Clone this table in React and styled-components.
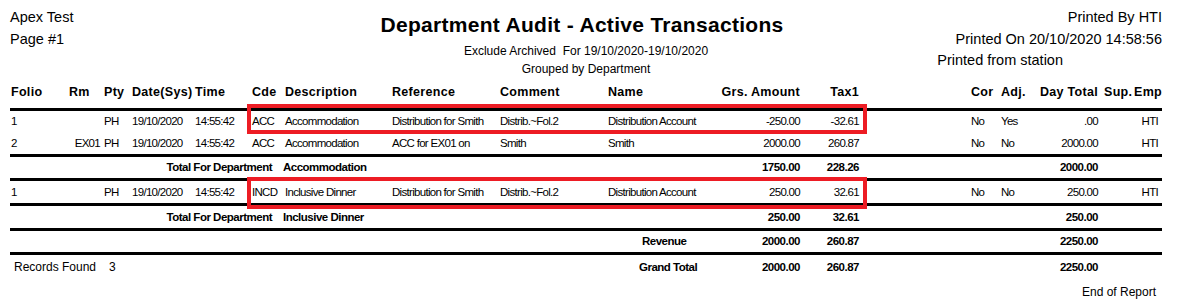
import React from "react";
import styled, { createGlobalStyle, css } from "styled-components";

const GlobalStyle = createGlobalStyle`
  html, body {
    margin: 0;
    padding: 0;
    background: #fff;
  }
  body {
    font-family: "Liberation Sans", Arial, sans-serif;
    color: #000;
  }
`;

const Page = styled.div`
  position: relative;
  width: 1179px;
  height: 304px;
  overflow: hidden;
`;

const Masthead = styled.header`
  display: grid;
  grid-template-columns: 1fr auto 1fr;
  height: 82px;
  padding: 0 17px 0 10px;
`;

const SideInfo = styled.div`
  display: flex;
  flex-direction: column;
  align-items: ${(p) => (p.$right ? "flex-end" : "flex-start")};
  padding-top: 7px;
  font-size: 14.5px;
  line-height: 21.5px;
  white-space: nowrap;
`;

const StationLine = styled.span`
  margin-right: 99px;
`;

const TitleBlock = styled.div`
  text-align: center;
  padding-top: 12px;
`;

const Title = styled.h1`
  margin: 0 8px 4px 0;
  font-size: 21px;
  line-height: 26px;
  font-weight: bold;
  letter-spacing: 0.3px;
  white-space: nowrap;
`;

const Subtitle = styled.div`
  font-size: 12px;
  line-height: 18px;
  white-space: pre;
`;

const Report = styled.section`
  width: 1152px;
  margin-left: 10px;
`;

const kinds = {
  head: css`
    font-size: 12.5px;
    font-weight: bold;
    letter-spacing: 0.3px;
    line-height: 16px;
    padding-top: 2px;
  `,
  data: css`
    font-size: 11.5px;
    letter-spacing: -0.7px;
  `,
  total: css`
    font-size: 11.5px;
    font-weight: bold;
    letter-spacing: -0.5px;
  `,
};

const Row = styled.div`
  display: grid;
  grid-template-columns: 58px 35px 28px 63px 57px 33px 107px 108px 108px 92px 100px 59px 112px 30px 39px 58px 34px 26px;
  align-items: start;
  box-sizing: content-box;
  height: ${(p) => p.$h}px;
  line-height: ${(p) => p.$h}px;
  padding: 0 4px 0 1px;
  border-bottom: ${(p) => (p.$rule ? "3px solid #000" : "none")};
  white-space: nowrap;
  ${(p) => kinds[p.$kind]}
`;

const Cell = styled.div`
  grid-column: ${(p) => p.$col} / span ${(p) => p.$span || 1};
  text-align: ${(p) => (p.$right ? "right" : "left")};
  padding-left: ${(p) => p.$indent || 0}px;
  padding-right: ${(p) => p.$pr || 0}px;
  margin-left: ${(p) => p.$shift || 0}px;
`;

const RecordsNote = styled(Cell)`
  font-size: 12px;
  font-weight: normal;
  letter-spacing: 0;
`;

const Count = styled.span`
  margin-left: 13px;
`;

const Footer = styled.div`
  height: 24px;
  line-height: 24px;
  font-size: 12px;
  text-align: right;
  padding-right: 6px;
`;

const Highlight = styled.div`
  position: absolute;
  left: 247px;
  top: ${(p) => p.$top}px;
  width: 620px;
  height: ${(p) => p.$h}px;
  box-sizing: border-box;
  border: 4px solid #ed1c24;
  pointer-events: none;
`;

const transactions = {
  accommodation: [
    {
      folio: "1", rm: "", pty: "PH", date: "19/10/2020", time: "14:55:42", cde: "ACC",
      desc: "Accommodation", ref: "Distribution for Smith", comment: "Distrib.~Fol.2",
      name: "Distribution Account", grs: "-250.00", tax: "-32.61", cor: "No", adj: "Yes",
      day: ".00", emp: "HTI",
    },
    {
      folio: "2", rm: "EX01", pty: "PH", date: "19/10/2020", time: "14:55:42", cde: "ACC",
      desc: "Accommodation", ref: "ACC for EX01 on", comment: "Smith",
      name: "Smith", grs: "2000.00", tax: "260.87", cor: "No", adj: "No",
      day: "2000.00", emp: "HTI",
    },
  ],
  dinner: [
    {
      folio: "1", rm: "", pty: "PH", date: "19/10/2020", time: "14:55:42", cde: "INCD",
      desc: "Inclusive Dinner", ref: "Distribution for Smith", comment: "Distrib.~Fol.2",
      name: "Distribution Account", grs: "250.00", tax: "32.61", cor: "No", adj: "No",
      day: "250.00", emp: "HTI",
    },
  ],
};

function TxRow({ t, h, rule }) {
  return (
    <Row $kind="data" $h={h} $rule={rule}>
      <Cell $col={1}>{t.folio}</Cell>
      <Cell $col={2} $right $pr={4}>{t.rm}</Cell>
      <Cell $col={3}>{t.pty}</Cell>
      <Cell $col={4}>{t.date}</Cell>
      <Cell $col={5}>{t.time}</Cell>
      <Cell $col={6}>{t.cde}</Cell>
      <Cell $col={7}>{t.desc}</Cell>
      <Cell $col={8}>{t.ref}</Cell>
      <Cell $col={9}>{t.comment}</Cell>
      <Cell $col={10}>{t.name}</Cell>
      <Cell $col={11} $right>{t.grs}</Cell>
      <Cell $col={12} $right>{t.tax}</Cell>
      <Cell $col={14}>{t.cor}</Cell>
      <Cell $col={15}>{t.adj}</Cell>
      <Cell $col={16} $right>{t.day}</Cell>
      <Cell $col={18} $right>{t.emp}</Cell>
    </Row>
  );
}

function SumValues({ grs, tax, day }) {
  return (
    <>
      <Cell $col={11} $right>{grs}</Cell>
      <Cell $col={12} $right>{tax}</Cell>
      <Cell $col={16} $right>{day}</Cell>
    </>
  );
}

function DeptTotal({ dept, h, grs, tax, day }) {
  return (
    <Row $kind="total" $h={h} $rule>
      <Cell $col={1} $span={6} $right $pr={13}>Total For Department</Cell>
      <Cell $col={7} $shift={-2}>{dept}</Cell>
      <SumValues grs={grs} tax={tax} day={day} />
    </Row>
  );
}

export default function App() {
  const [acc1, acc2] = transactions.accommodation;
  const [dinner] = transactions.dinner;

  return (
    <Page>
      <GlobalStyle />
      <Masthead>
        <SideInfo>
          <span>Apex Test</span>
          <span>Page #1</span>
        </SideInfo>
        <TitleBlock>
          <Title>Department Audit - Active Transactions</Title>
          <Subtitle>Exclude Archived  For 19/10/2020-19/10/2020</Subtitle>
          <Subtitle>Grouped by Department</Subtitle>
        </TitleBlock>
        <SideInfo $right>
          <span>Printed By HTI</span>
          <span>Printed On 20/10/2020 14:58:56</span>
          <StationLine>Printed from station</StationLine>
        </SideInfo>
      </Masthead>

      <Report>
        <Row $kind="head" $h={24} $rule>
          <Cell $col={1}>Folio</Cell>
          <Cell $col={2}>Rm</Cell>
          <Cell $col={3}>Pty</Cell>
          <Cell $col={4}>Date(Sys)</Cell>
          <Cell $col={5}>Time</Cell>
          <Cell $col={6}>Cde</Cell>
          <Cell $col={7}>Description</Cell>
          <Cell $col={8}>Reference</Cell>
          <Cell $col={9}>Comment</Cell>
          <Cell $col={10}>Name</Cell>
          <Cell $col={11} $right>Grs. Amount</Cell>
          <Cell $col={12} $right>Tax1</Cell>
          <Cell $col={14}>Cor</Cell>
          <Cell $col={15}>Adj.</Cell>
          <Cell $col={16} $right>Day Total</Cell>
          <Cell $col={17} $indent={6}>Sup.</Cell>
          <Cell $col={18} $right $shift={2}>Emp</Cell>
        </Row>

        <TxRow t={acc1} h={21} />
        <TxRow t={acc2} h={22} rule />

        <DeptTotal dept="Accommodation" h={21} grs="1750.00" tax="228.26" day="2000.00" />

        <TxRow t={dinner} h={22} rule />

        <DeptTotal dept="Inclusive Dinner" h={22} grs="250.00" tax="32.61" day="250.00" />

        <Row $kind="total" $h={21} $rule>
          <Cell $col={10} $indent={34}>Revenue</Cell>
          <SumValues grs="2000.00" tax="260.87" day="2250.00" />
        </Row>

        <Row $kind="total" $h={25}>
          <RecordsNote $col={1} $span={4} $indent={3}>
            Records Found<Count>3</Count>
          </RecordsNote>
          <Cell $col={10} $indent={31}>Grand Total</Cell>
          <SumValues grs="2000.00" tax="260.87" day="2250.00" />
        </Row>

        <Footer>End of Report</Footer>
      </Report>

      <Highlight $top={104} $h={30} />
      <Highlight $top={177} $h={32} />
    </Page>
  );
}
